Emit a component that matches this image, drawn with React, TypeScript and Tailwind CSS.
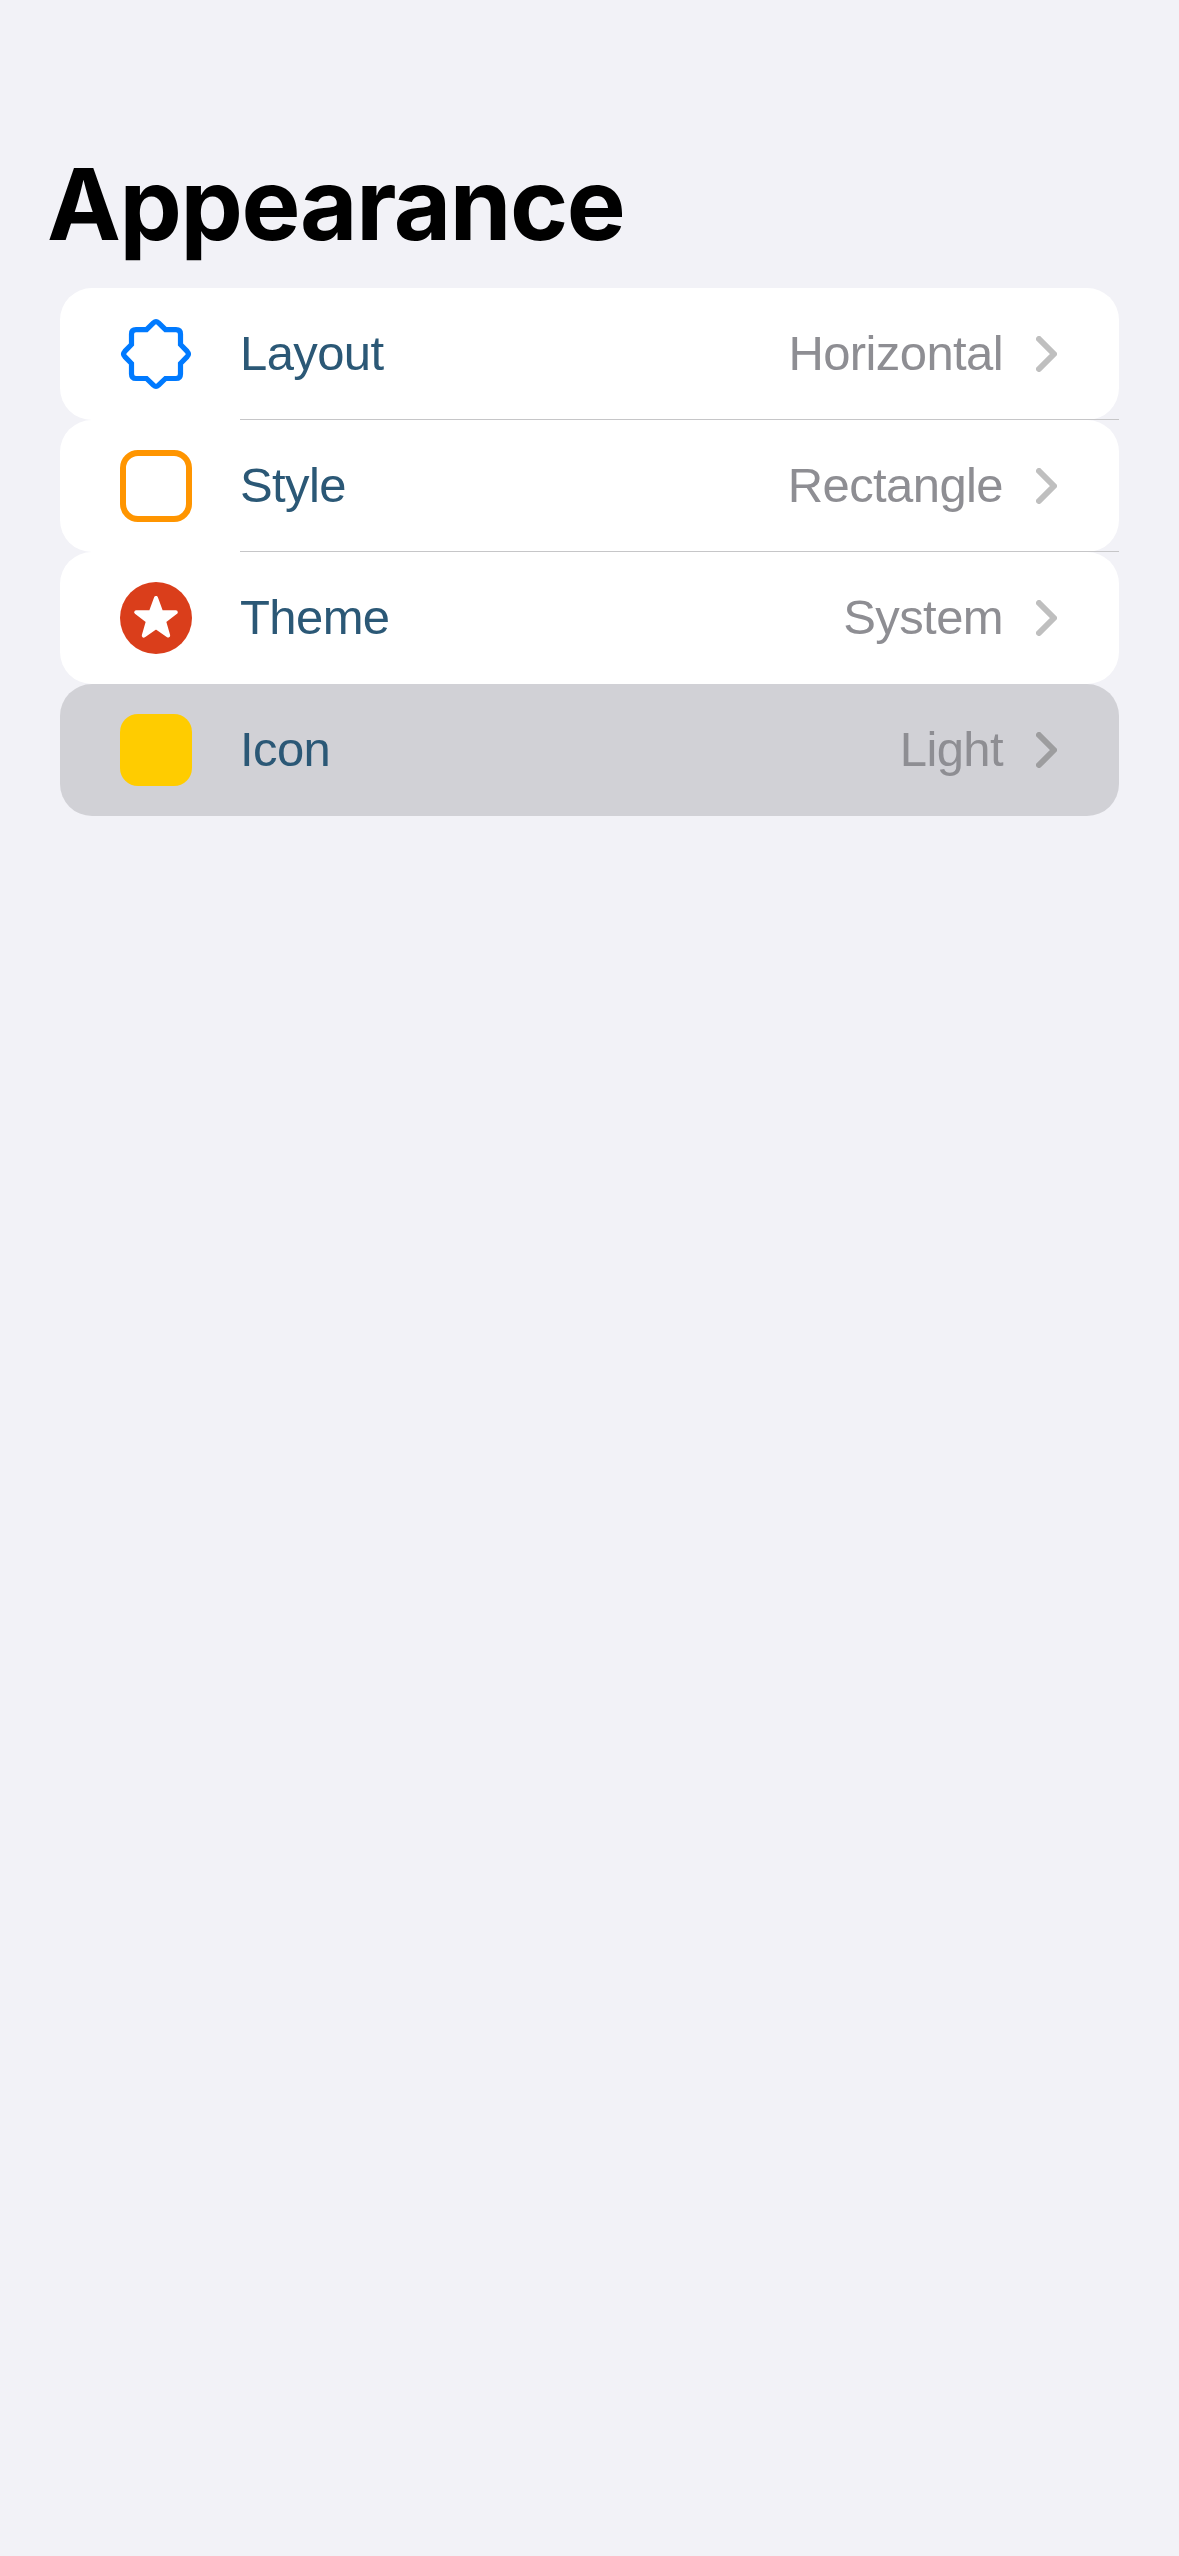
import type { ReactNode } from "react";

function BurstIcon() {
  return (
    <svg viewBox="0 0 72 72" className="size-[72px]" fill="none" stroke="#007AFF" strokeWidth="5.2" strokeLinejoin="miter">
      <path d="M33.4 4.8Q36 2.4 38.6 4.8L45.5 11.7H56Q60.5 11.7 60.5 16V26.5L67.2 33.4Q69.6 36 67.2 38.6L60.5 45.5V56Q60.5 60.5 56 60.5H45.5L38.6 67.2Q36 69.6 33.4 67.2L26.5 60.5H16Q11.5 60.5 11.5 56V45.5L4.8 38.6Q2.4 36 4.8 33.4L11.5 26.5V16Q11.5 11.7 16 11.7H26.5Z" />
    </svg>
  );
}

function StarIcon() {
  return (
    <svg viewBox="0 0 72 72" className="size-[72px]">
      <circle cx="36" cy="36" r="36" fill="#DA3E1B" />
      <path
        d="M36 16L41.2 30.2H55.8L44.1 39.2L48.2 53.6L36 45L23.8 53.6L27.9 39.2L16.2 30.2H30.8Z"
        fill="#fff"
        stroke="#fff"
        strokeWidth="4"
        strokeLinejoin="round"
      />
    </svg>
  );
}

function Chevron({ color }: { color: string }) {
  return (
    <svg viewBox="0 0 21 36" className="h-9 w-[21px]" fill="none" stroke={color} strokeWidth="6" strokeLinecap="round" strokeLinejoin="round">
      <path d="M3 3L18 18L3 33" />
    </svg>
  );
}

type RowProps = { icon: ReactNode; label: string; value: string; separator?: boolean; selected?: boolean };

function Row({ icon, label, value, separator, selected }: RowProps) {
  return (
    <li className="relative h-[132px]">
      <button
        type="button"
        className={`flex h-[132px] w-full items-center rounded-[32px] pr-[62px] pl-[60px] text-left ${
          selected ? "bg-[#D1D1D6]" : "bg-white"
        }`}
      >
        {icon}
        <span className="mb-0.5 ml-12 text-[#2B5876]">{label}</span>
        <span className="mr-[33px] mb-0.5 ml-auto text-[#8E8E93]">{value}</span>
        <Chevron color={selected ? "#9D9D9F" : "#BFBFBF"} />
      </button>
      {separator && <span className="absolute right-0 bottom-0 left-[180px] h-px bg-[#C6C6C8]" />}
    </li>
  );
}

export default function App() {
  return (
    <main className="flex min-h-[2556px] w-full flex-col bg-[#F2F2F7] px-[60px] pt-[132px] font-['Liberation_Sans',Arial,sans-serif]">
      <h1 className="-ml-[13px] h-[156px] font-['Inter',sans-serif] text-[99px] leading-[144px] font-bold tracking-[-1.4px] whitespace-nowrap text-black">
        Appearance
      </h1>
      <ul className="flex flex-col text-[49px] leading-[60px] tracking-[-0.6px]">
        <Row icon={<BurstIcon />} label="Layout" value="Horizontal" separator />
        <Row icon={<span className="size-[72px] rounded-[18px] border-[6px] border-[#FF9500]" />} label="Style" value="Rectangle" separator />
        <Row icon={<StarIcon />} label="Theme" value="System" />
        <Row icon={<span className="size-[72px] rounded-[18px] bg-[#FFCC00]" />} label="Icon" value="Light" selected />
      </ul>
    </main>
  );
}
